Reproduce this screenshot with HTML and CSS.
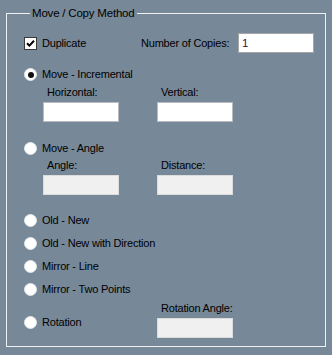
FILE: index.html
```html
<!DOCTYPE html>
<html>
<head>
<meta charset="utf-8">
<link rel="stylesheet" href="styles.css">
</head>
<body>
<fieldset class="group">
  <legend class="group-title">Move / Copy Method</legend>

  <div class="row-top">
    <label class="opt">
      <span class="check"><svg width="9" height="9" viewBox="0 0 9 9"><path d="M1 4.2 L3.4 6.6 L8 1.8" fill="none" stroke="#000" stroke-width="2"/></svg></span>
      <span>Duplicate</span>
    </label>
    <span class="lbl">Number of Copies:</span>
    <div class="box box-main">1</div>
  </div>

  <label class="opt opt-incr"><span class="radio on"></span><span>Move - Incremental</span></label>
  <div class="pair">
    <span class="lbl field-lbl">Horizontal:</span>
    <span class="lbl field-lbl">Vertical:</span>
    <div class="box"></div>
    <div class="box"></div>
  </div>

  <label class="opt opt-angle"><span class="radio"></span><span>Move - Angle</span></label>
  <div class="pair">
    <span class="lbl field-lbl">Angle:</span>
    <span class="lbl field-lbl">Distance:</span>
    <div class="box off"></div>
    <div class="box off"></div>
  </div>

  <label class="opt opt-first"><span class="radio"></span><span>Old - New</span></label>
  <label class="opt opt-list"><span class="radio"></span><span>Old - New with Direction</span></label>
  <label class="opt opt-list"><span class="radio"></span><span>Mirror - Line</span></label>
  <label class="opt opt-list"><span class="radio"></span><span>Mirror - Two Points</span></label>

  <div class="row-rot">
    <label class="opt opt-rot"><span class="radio"></span><span>Rotation</span></label>
    <div class="rot-field">
      <span class="lbl">Rotation Angle:</span>
      <div class="box off"></div>
    </div>
  </div>
</fieldset>
</body>
</html>
```

FILE: styles.css
```css
html, body {
  margin: 0;
  padding: 0;
  background: #778899;
}
body {
  width: 332px;
  height: 355px;
  overflow: hidden;
  font-family: "Liberation Sans", Arial, sans-serif;
  font-size: 11px;
  letter-spacing: -0.2px;
  color: #000;
  line-height: 13px;
}
.group {
  box-sizing: border-box;
  width: 320px;
  margin: 7px 0 0 6px;
  padding: 0 0 8px 17px;
  border: 1px solid #eef0f2;
  min-width: 0;
}
.group-title {
  margin-left: 6px;
  padding: 0 2px;
  line-height: 13px;
  height: 13px;
  font-size: 11.5px;
}
.row-top {
  display: grid;
  grid-template-columns: 117px 97px 76px;
  align-items: center;
  margin-top: 13px;
  height: 20px;
}
.opt {
  display: flex;
  align-items: center;
  height: 13px;
  gap: 5px;
  white-space: nowrap;
}
.check {
  box-sizing: border-box;
  width: 13px;
  height: 13px;
  background: #fff;
  border: 1px solid #3a3a3a;
  display: flex;
  align-items: center;
  justify-content: center;
}
.check svg { display: block; }
.radio {
  box-sizing: border-box;
  width: 13px;
  height: 13px;
  border-radius: 50%;
  background: #fff;
  border: 1px solid #e4e6e8;
  display: flex;
  align-items: center;
  justify-content: center;
  flex: none;
}
.radio.on::after {
  content: "";
  width: 6px;
  height: 6px;
  border-radius: 50%;
  background: #111;
}
.lbl { white-space: nowrap; display: block; }
.box {
  box-sizing: border-box;
  width: 76px;
  height: 20px;
  background: #fff;
  border: 1px solid #b8bcc0;
}
.box-main {
  border-color: #a4a6a8;
  padding-left: 3px;
  line-height: 18px;
  color: #3c0c4c;
  font-size: 11.5px;
}
.box.off {
  background: #f0f0f0;
  border-color: #dcdcdc;
}
.opt-incr { margin-top: 15px; }
.pair {
  display: grid;
  grid-template-columns: 76px 76px;
  column-gap: 38px;
  row-gap: 3px;
  margin-left: 19px;
}
.field-lbl { padding-left: 4px; }
.pair:nth-of-type(2) { margin-top: 5px; }
.opt-angle { margin-top: 20px; }
.opt-angle + .pair { margin-top: 4px; }
.opt-first { margin-top: 19px; }
.opt-list { margin-top: 10px; }
.row-rot {
  display: grid;
  grid-template-columns: 133px 76px;
  margin-top: 6px;
}
.opt-rot { margin-top: 14px; }
.rot-field .lbl { padding-left: 4px; margin-bottom: 3px; }
```
